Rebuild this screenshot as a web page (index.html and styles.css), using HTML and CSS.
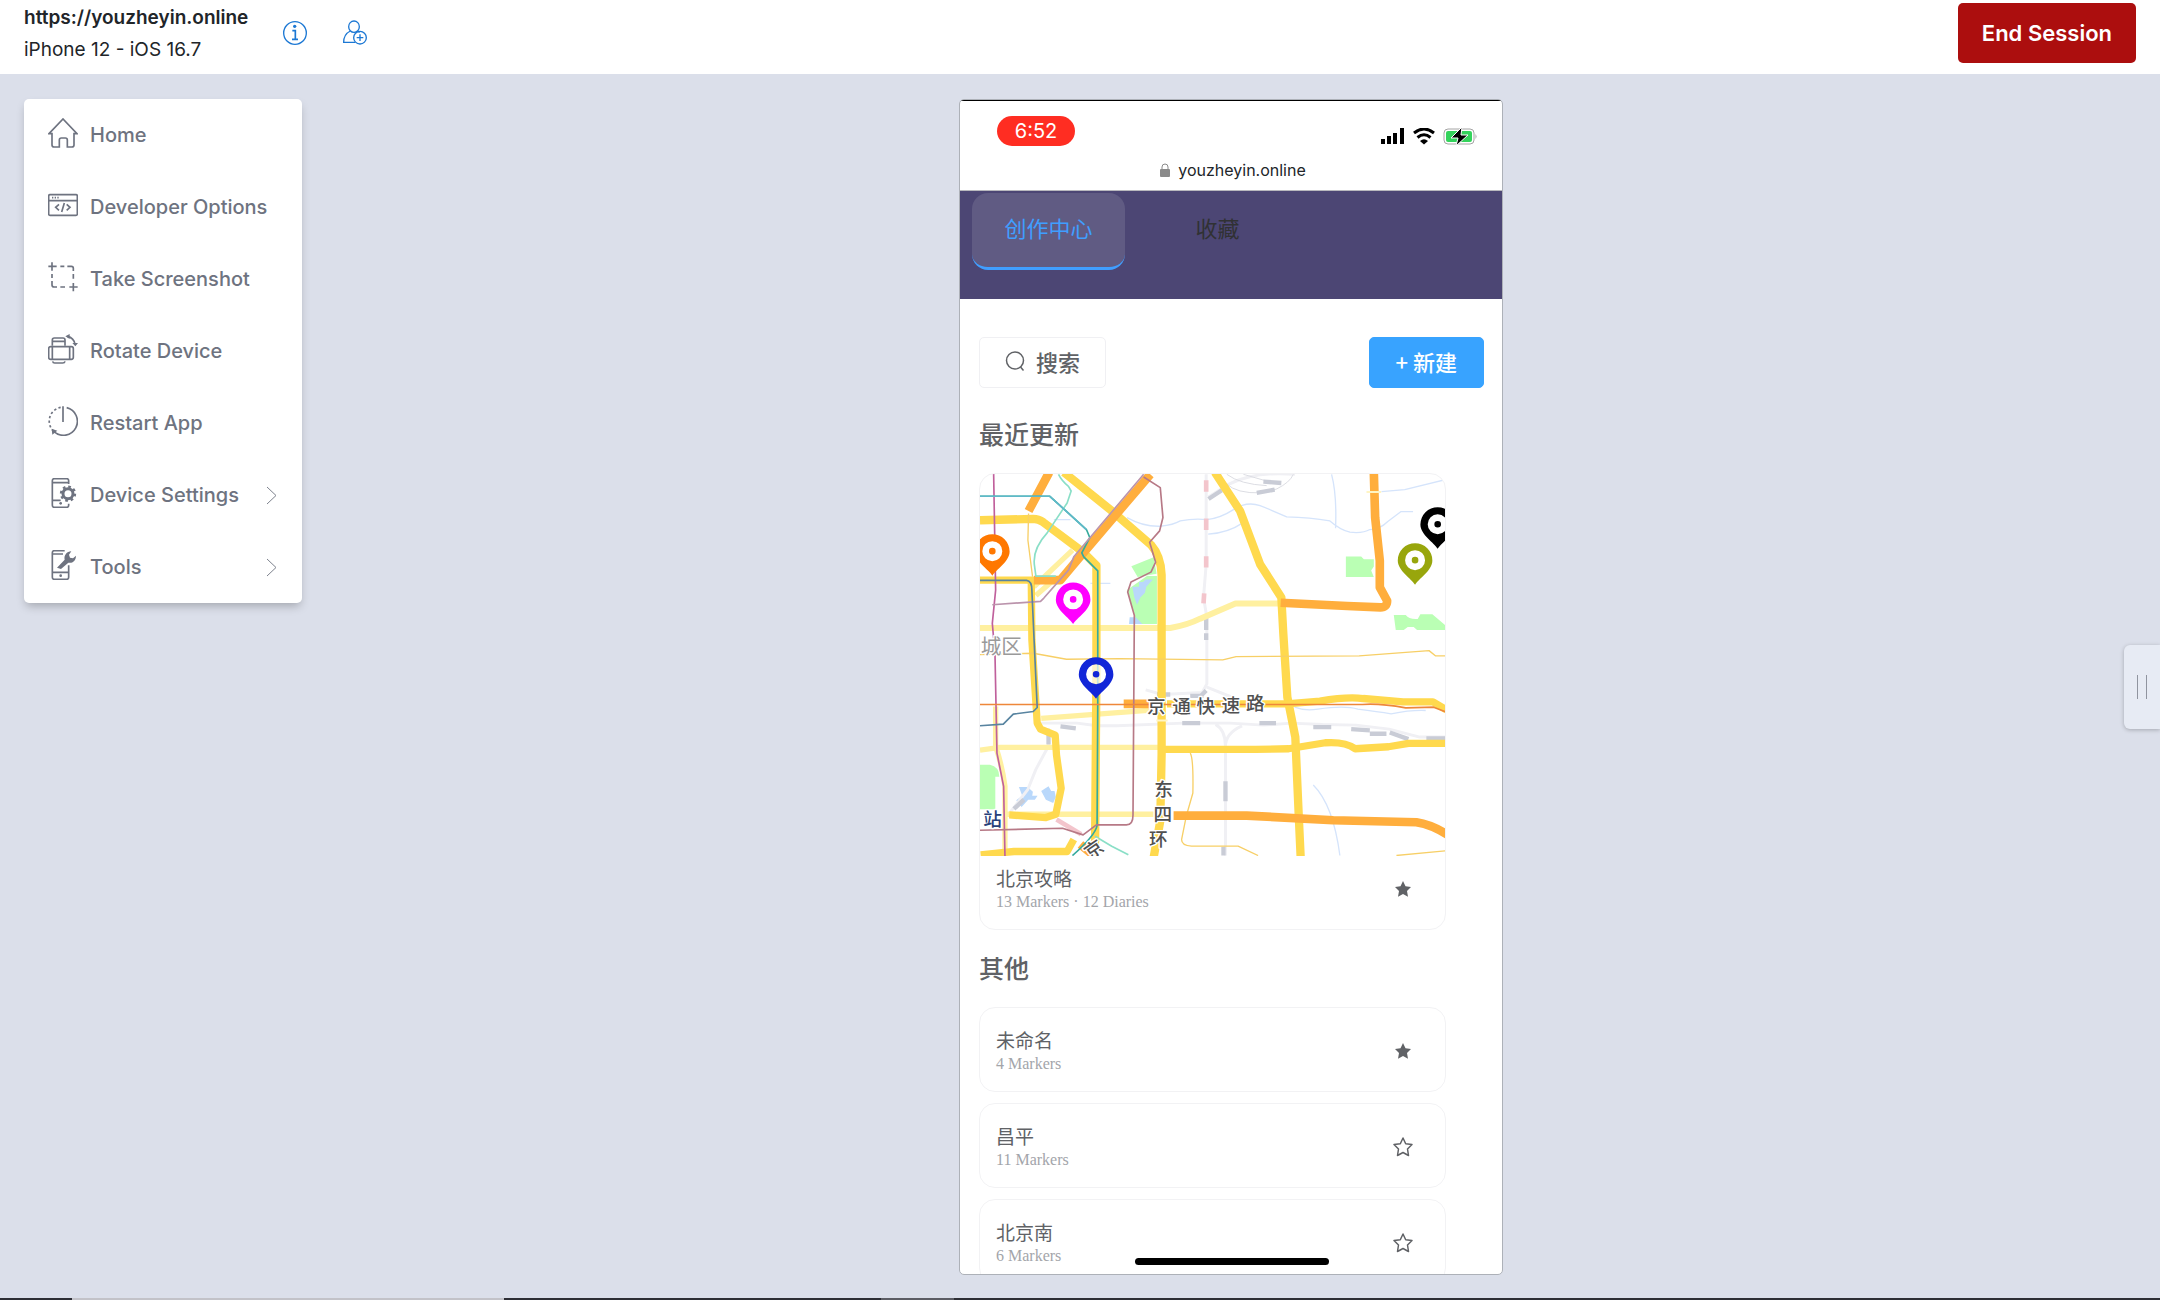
FILE: index.html
```
<!DOCTYPE html>
<html lang="zh-CN">
<head>
  <meta charset="UTF-8" />
  <meta name="viewport" content="width=device-width, initial-scale=1.0" />
  <title>iPhone 12 - iOS 16.7</title>
  <link rel="stylesheet" href="styles.css">
</head>
<body>
  <header class="topbar">
    <div class="session">
      <div class="session-url">https://youzheyin.online</div>
      <div class="session-device">iPhone 12 - iOS 16.7</div>
    </div>
    <button class="icon-btn" aria-label="Session info">
      <svg width="26" height="26" viewBox="0 0 78 78" fill="none" stroke="#1c78d4" stroke-width="4">
        <circle cx="39" cy="39" r="34"/>
        <circle cx="38" cy="19" r="5" fill="#1c78d4" stroke="none"/>
        <path d="M31 32h9v25M30 58h18" stroke-width="5"/>
      </svg>
    </button>
    <button class="icon-btn" aria-label="Invite user">
      <svg width="26" height="26" viewBox="0 0 78 78" fill="none" stroke="#1c78d4" stroke-width="4">
        <ellipse cx="36" cy="20" rx="16" ry="17"/>
        <path d="M25 33c-12 6-20 16-20 34h34M47 33l6 4"/>
        <circle cx="54" cy="53" r="19"/>
        <path d="M54 43v20M44 53h20"/>
      </svg>
    </button>
    <button class="end-btn">End Session</button>
  </header>

  <main class="workspace">
    <nav class="menu">
      <button class="menu-item">
        <svg class="menu-icon" viewBox="0 0 90 90">
          <path d="M3 47L45 3l42 44h-9v34q0 6-6 6H58V66q0-6-6-6H40q-6 0-6 6v21H18q-6 0-6-6V47z"/>
        </svg>
        <span>Home</span>
      </button>
      <button class="menu-item">
        <svg class="menu-icon" viewBox="0 0 90 90">
          <rect x="2" y="14" width="86" height="62" rx="4"/>
          <path d="M2 32h86M12 23h4M20 23h4M28 23h4M33 43l-10 9 10 9M56 43l10 9-10 9M49 39l-8 27"/>
        </svg>
        <span>Developer Options</span>
      </button>
      <button class="menu-item">
        <svg class="menu-icon" viewBox="0 0 90 90">
          <path d="M1 13h25M12 1v25M64 75h25M76 63v25M37 13h12M58 13h12q6 0 6 6v8M76 36v14M12 36v12M12 57v12q0 6 6 6h9M37 75h14"/>
        </svg>
        <span>Take Screenshot</span>
      </button>
      <button class="menu-item">
        <svg class="menu-icon" viewBox="0 0 90 90">
          <rect x="2" y="38" width="74" height="38" rx="6"/>
          <path d="M13 38v38M65 38v38M13 35V18q0-6 6-6h26q6 0 6 6v17M13 22h38M14 82q1 5 6 5h24q6 0 7-5M58 7q20 4 23 24"/>
          <path class="solid" d="M65 0L52 7l13 8zM73 27h17l-8 10z"/>
        </svg>
        <span>Rotate Device</span>
      </button>
      <button class="menu-item">
        <svg class="menu-icon" viewBox="0 0 90 90">
          <path d="M45 1v47M56 5A42 42 0 1 1 18 77"/>
          <path d="M38 4A42 42 0 0 0 16 75" stroke-dasharray="7 7"/>
          <path class="solid" d="M11 68l17 6-15 12z"/>
        </svg>
        <span>Restart App</span>
      </button>
      <button class="menu-item">
        <svg class="menu-icon" viewBox="0 0 90 90">
          <path d="M62 18V8q0-6-6-6H19q-6 0-6 6v74q0 6 6 6h37q6 0 6-6v-5M13 14h49M13 67h25"/>
          <circle class="solid" cx="38" cy="76" r="4"/>
          <circle cx="60" cy="47" r="15" stroke-width="9"/>
          <circle cx="60" cy="47" r="21" stroke-width="7" stroke-dasharray="8 8.500"/>
        </svg>
        <span>Device Settings</span>
        <svg class="chevron" width="11" height="19" viewBox="0 0 11 19"><path d="M1 1l9 8.500-9 8.500"/></svg>
      </button>
      <button class="menu-item">
        <svg class="menu-icon" viewBox="0 0 90 90">
          <path d="M50 2H19q-6 0-6 6v74q0 6 6 6h37q6 0 6-6V46M13 12h32M13 67h49"/>
          <circle class="solid" cx="38" cy="77" r="4"/>
          <path class="solid" d="M27 53l23-24c-3-12 6-25 20-25l-7 10 3 9 9 2 9-8c0 15-11 24-23 21L39 57z"/>
        </svg>
        <span>Tools</span>
        <svg class="chevron" width="11" height="19" viewBox="0 0 11 19"><path d="M1 1l9 8.500-9 8.500"/></svg>
      </button>
    </nav>

    <div class="stage">
      <div class="phone">
        <div class="status">
          <div class="status-row">
            <span class="clock">6:52</span>
            <svg width="97" height="18" viewBox="0 0 97 18">
              <path d="M1 11h4v5H1zM7 8h4v8H7zM13 5h4v11h-4zM20 0h4v16h-4z"/>
              <g fill="none" stroke="#000" stroke-width="3">
                <path d="M34 5q10-8 20 0M37.500 9.500q6.500-5.500 13 0"/>
              </g>
              <path d="M40 13q4-3.500 8 0l-4 3.500z"/>
              <rect x="64" y="1" width="30" height="15" rx="4" fill="none" stroke="#a4a4a4"/>
              <path d="M95.500 6q2 2.500 0 5z" fill="#a4a4a4"/>
              <rect x="66" y="3" width="26" height="11" rx="2" fill="#34d35c"/>
              <path d="M82-1L71 10h7l-2 8 12-11h-7z" stroke="#fff"/>
            </svg>
          </div>
          <div class="address">
            <svg width="10" height="14" viewBox="0 0 10 14">
              <path d="M2 7V4q0-3 3-3t3 3v3" fill="none" stroke="#8a8a8a"/>
              <rect y="6" width="10" height="8" rx="1" fill="#8a8a8a"/>
            </svg>
            <span>youzheyin.online</span>
          </div>
        </div>

        <div class="tabs">
          <button class="tab active">创作中心</button>
          <button class="tab">收藏</button>
        </div>

        <div class="content">
          <div class="toolbar">
            <button class="search-btn">
              <svg width="20" height="20" viewBox="0 0 20 20" fill="none" stroke="#606266" stroke-width="1.500">
                <circle cx="10" cy="9.500" r="8.500"/><path d="M15.500 16l3 3.500"/>
              </svg>
              搜索
            </button>
            <button class="new-btn">+ 新建</button>
          </div>

          <h2>最近更新</h2>
          <article class="card">
            <svg class="map" viewBox="58 221 1398 1149">
              <!-- parks and water -->
              <g fill="#baffb4">
                <path d="M513 498l67-27 9 50-57 10zM500 570l60-42h30v144h-60zM1158 469h46l8 8h30v22l-8 12 8 20h-84zM1302 645h36q10 14 36 12l8-14h36l40 34v13h-86l-10-9h-18l-12 9h-24zM58 1095h30q28 6 28 36h-12v98H58z"/>
              </g>
              <g fill="#b9d8fb">
                <path d="M516 560h20v-14h12l8-8h22l-20 22-4 18-14 14-10 22-8-22zM508 652h18l20 20h-40zM175 1162h26l16 14-2 12h16l-8 12h-20l-20 22-16-20 18-14zM242 1174l22-14 8 14h10l4 18-8 18-22-10z"/>
              </g>
              <g class="river">
                <path d="M500 352q50 28 100 26 40-4 60-16 40-8 80-4 40-4 80-30 40-26 80-12 40 16 80 34 70 2 130 12 30 26 60 34 40 4 60-8 30 0 54-24l40-30h36M1115 222q16 60 12 162M744 402q60-4 104-34M280 358h50M390 550h60M1004 922q30 12 70 6 80-12 120 0 60 8 100 14 60-12 104-10M1060 1156q60 60 80 212M1265 274l70-6 122-30"/>
              </g>

              <!-- railways -->
              <g class="rail">
                <path d="M738 222v270l-8 100 10 60v200l-14 26-120 6-50-14M740 862l100 40M240 970h110l60 8h60l200-8h140l100 6 84-6 94 4 100 2 100 12 92 24h82M796 1368V1040q0-50-30-66M796 1040q0-40 50-62M264 985v54l-38 70-24 60-54 70M745 290l60-38q80-40 200-30"/>
              </g>
              <path class="rail-thin" d="M780 218q10 40 60 54 60 14 110-6 40-20 50-44M800 222q40 30 120 34M850 222l90 26"/>
              <path class="rail-dash" d="M738 650v40M738 700v20M745 296l40-26M738 872l-14 14M300 980l46 6M666 970h54M898 970h50M1060 982h54M1174 988l56 4M1230 1002h50M1290 998l56 20M1400 1016h56M264 1006v28M796 1145v60M190 1200l-30 28M790 1342v26M690 888h40M590 884h40M890 278l54-10M910 244l54 4"/>
              <path class="pink-dash" d="M738 240v34M738 355v34M738 468v34M732 580l-2 30M288 1260l74 44"/>

              <!-- light yellow roads -->
              <g class="road-soft">
                <path d="M58 684h572q50-8 90-28l106-46h140" stroke-width="18"/>
                <path d="M58 1051l60-8h480M242 956l340-26M140 1244h460M105 920v120q20 60 28 120v208M220 560l116-110M226 586l60-52" stroke-width="16"/>
              </g>

              <!-- main yellow roads -->
              <g class="road">
                <path d="M58 360l160-4q16 0 30 10l120 90 40 40v330l-4 500-10 50-70 50M310 216l142 114 120 104q30 34 32 90v540l-4 200-20 110M764 216l76 116 60 160 64 100 6 110 12 190 24 120 10 230 6 130" stroke-width="25"/>
                <path d="M212 530l2 190 16 250 10 18 44 18 4 60 14 100-16 78-30 10-110-8M606 1049h280l100-2 110-18q60-4 90 18l100-6 60-10h110M620 912h360l100-8q80-14 130-8l120 10h90l40 24M58 540h160M340 1320l-20 36H160l-100 10" stroke-width="22"/>
              </g>
              <g class="road-thin">
                <path d="M58 764l160-4 100 18 160-2 310 4 40-10 370-2 210-16 20 16h28M690 1060q10 14 8 120l-20 70-14 70q0 18 30 20h140l60 28M1310 1368l147-14M204 340l-2 80 14 110"/>
              </g>
              <g class="road-orange">
                <path d="M266 216l-62 116M570 222L350 480l-50 60h-80M1242 216l4 136 14 130v80l22 40q0 20-20 20l-100-4-200-10M490 912h110M640 1248h220l260 14 250 6q50 8 100 42M360 1335l34 28" stroke-width="26"/>
              </g>
              <path class="gap" d="M1220 275h44M588 962h34"/>

              <!-- metro lines -->
              <g class="metro">
                <path d="M99 220l6 350-10 100 8 90 6 300 20 100 4 210" stroke="#c0609c"/>
                <path d="M58 288h210l110 100 10 24-24 46 6 12 42 42v400l-2 366q-6 30-74 90" stroke="#35aa9c"/>
                <path d="M294 222q10 20 30 36l8 14-12 36-60 90q-46 50-38 100l4 30h60M404 1310l50 30 50 26" stroke="#8adfc7"/>
                <path d="M550 230l50 32 8 90-10 40-30 34 18 60-14 30-60 30-10 30 20 70-4 600q0 30-20 30h-90l-40 30-62-20-248 6" stroke="#b77986"/>
                <path d="M550 222L340 470l-16 40-74 84-10 10-145 10" stroke="#bb94ac"/>
                <path d="M58 914h1150q50-4 130 10l84-2 40 16" stroke="#ee873a"/>
                <path d="M58 541h140q16 2 16 30l8 180 8 172-12 12-60 8-30 30-70 5" stroke="#5884a0"/>
                <path d="M58 288h210l110 100" stroke="#5fb9c9"/>
              </g>

              <g class="map-label">
                <text class="district" x="60" y="762">城区</text>
                <text class="station" x="68" y="1278">站</text>
                <text x="560" y="939">京</text>
                <text x="636" y="939">通</text>
                <text x="709" y="939">快</text>
                <text x="784" y="937">速</text>
                <text x="858" y="931">路</text>
                <text x="582" y="1190">东</text>
                <text x="580" y="1264">四</text>
                <text x="566" y="1340">环</text>
                <text x="372" y="1370" transform="rotate(-35 400 1350)">京</text>
              </g>

              <defs>
                <path id="pin" fill-rule="evenodd" d="M0 0C-10-18-52-42-52-73A52 52 0 0 1 52-73C52-42 10-18 0 0zM-30-74a30 30 0 1 0 60 0a30 30 0 1 0-60 0zM-10-74a10 10 0 1 1 20 0a10 10 0 1 1-20 0z"/>
              </defs>
              <g fill="#fff">
                <circle cx="95" cy="453" r="31"/><circle cx="338" cy="598" r="31"/>
                <circle cx="1366" cy="480" r="31"/><circle cx="1434" cy="372" r="31"/>
                <circle cx="407" cy="823" r="31" fill-opacity=".7"/>
              </g>
              <use href="#pin" x="95" y="527" fill="#ff7800"/>
              <use href="#pin" x="338" y="672" fill="#f0f"/>
              <use href="#pin" x="407" y="897" fill="#1226d8"/>
              <use href="#pin" x="1434" y="446" fill="#000"/>
              <use href="#pin" x="1366" y="554" fill="#98a60c"/>
            </svg>
            <div class="card-body">
              <div>
                <div class="name">北京攻略</div>
                <div class="meta">13 Markers · 12 Diaries</div>
              </div>
              <button class="star on" aria-label="Unstar"><svg viewBox="0 0 20 20"><path d="M10 2l2.500 5.200 5.500.8-4 4 1 5.700-5-2.700-5 2.700 1-5.700-4-4 5.500-.8z"/></svg></button>
            </div>
          </article>

          <h2>其他</h2>
          <ul class="list">
            <li class="item">
              <div>
                <div class="name">未命名</div>
                <div class="meta">4 Markers</div>
              </div>
              <button class="star on" aria-label="Unstar"><svg viewBox="0 0 20 20"><path d="M10 2l2.500 5.200 5.500.8-4 4 1 5.700-5-2.700-5 2.700 1-5.700-4-4 5.500-.8z"/></svg></button>
            </li>
            <li class="item">
              <div>
                <div class="name">昌平</div>
                <div class="meta">11 Markers</div>
              </div>
              <button class="star" aria-label="Star"><svg viewBox="0 0 20 20"><path d="M10 1l2.700 5.700 6.300.8-4.500 4.500 1 6.500-5.500-3-5.500 3 1-6.500L1 7.500l6.300-.8z"/></svg></button>
            </li>
            <li class="item">
              <div>
                <div class="name">北京南</div>
                <div class="meta">6 Markers</div>
              </div>
              <button class="star" aria-label="Star"><svg viewBox="0 0 20 20"><path d="M10 1l2.700 5.700 6.300.8-4.500 4.500 1 6.500-5.500-3-5.500 3 1-6.500L1 7.500l6.300-.8z"/></svg></button>
            </li>
          </ul>
        </div>
        <div class="home-bar"></div>
      </div>
    </div>

    <button class="drawer-handle" aria-label="Open panel"></button>
  </main>

  <footer class="taskbar"></footer>
</body>
</html>
```

FILE: styles.css
```
* {
  box-sizing: border-box;
}
body {
  margin: 0;
  height: 100vh;
  display: flex;
  flex-direction: column;
  background: #dbdfea;
  color: #212529;
  font-family: Inter, "Noto Sans CJK SC", sans-serif;
  font-size: 19px;
}
button {
  font: inherit;
  color: inherit;
  border: none;
  background: none;
  padding: 0;
  cursor: pointer;
}

/* top bar */
.topbar {
  flex: none;
  height: 74px;
  display: flex;
  align-items: center;
  padding: 0 24px;
  background: #fff;
}
.session {
  margin-right: 34px;
  padding-bottom: 6px;
  line-height: 32px;
}
.session-url {
  font-weight: 600;
}
.icon-btn {
  height: 26px;
  margin-bottom: 8px;
  margin-right: 34px;
}
.end-btn {
  margin-left: auto;
  margin-bottom: 8px;
  padding: 0 24px;
  height: 60px;
  border-radius: 5px;
  background: #ac0e0e;
  color: #fff;
  font-size: 22px;
  font-weight: 600;
}

/* workspace */
.workspace {
  flex: 1;
  min-height: 0;
  display: flex;
  align-items: flex-start;
  position: relative;
  padding: 25px 0 23px 24px;
}
.menu {
  width: 278px;
  background: #fff;
  border-radius: 5px;
  box-shadow: 0 5px 10px -2px rgba(0, 0, 0, 0.25);
}
.menu-item {
  width: 100%;
  height: 72px;
  display: flex;
  align-items: center;
  gap: 12px;
  padding: 0 25px 0 24px;
  color: #6e7380;
  font-size: 20px;
  font-weight: 500;
}
.menu-icon {
  width: 30px;
  height: 30px;
  margin-bottom: 4px;
  fill: none;
  stroke: #6e7380;
  stroke-width: 5;
}
.menu-icon .solid {
  fill: #6e7380;
  stroke: none;
}
.chevron {
  margin-left: auto;
  fill: none;
  stroke: #7d828d;
}
.stage {
  flex: 1;
  align-self: stretch;
  display: flex;
  justify-content: center;
}

/* device screen */
.phone {
  width: 544px;
  height: 100%;
  position: relative;
  overflow: hidden;
  background: #fff;
  border: 1px solid #adb1b8;
  border-radius: 5px;
}
.status {
  height: 91px;
  border-top: 1px solid #000;
  border-bottom: 1px solid #b9b9be;
  padding: 15px 25px 0 37px;
}
.status-row {
  display: flex;
  justify-content: space-between;
  align-items: flex-end;
}
.clock {
  width: 78px;
  height: 30px;
  border-radius: 15px;
  background: #ff2d22;
  color: #fff;
  font-size: 20px;
  line-height: 30px;
  text-align: center;
}
.address {
  display: flex;
  align-items: center;
  justify-content: center;
  gap: 8px;
  margin-top: 12px;
  padding-right: 8px;
  font-size: 16px;
  line-height: 24px;
}
.tabs,
.content {
  font-family: "Noto Sans CJK SC", sans-serif;
}
.tabs {
  height: 108px;
  display: flex;
  align-items: flex-start;
  gap: 16px;
  padding: 2px 12px;
  background: #4c4674;
  font-size: 22px;
}
.tab {
  width: 153px;
  height: 77px;
  padding-bottom: 6px;
  border-bottom: 3px solid transparent;
  border-radius: 16px;
  color: #303133;
}
.tab.active {
  background: #605b83;
  border-color: #409eff;
  color: #409eff;
}
.content {
  padding: 38px 18px 0 19px;
  color: #606266;
}
.toolbar {
  display: flex;
  justify-content: space-between;
  margin-bottom: 28px;
  font-size: 22px;
  font-weight: 500;
}
.search-btn,
.new-btn {
  height: 51px;
  display: flex;
  align-items: center;
  gap: 11px;
  padding: 0 25px 3px;
  border: 1px solid #f0f0f3;
  border-radius: 5px;
}
.new-btn {
  padding: 0 26px 3px;
  background: #38a3ff;
  border-color: #38a3ff;
  color: #fff;
}
h2 {
  margin: 20px 0 23px;
  font-size: 25px;
  font-weight: 500;
  line-height: 34px;
}
.card,
.item {
  margin-right: 38px;
  border: 1px solid #f2f2f4;
  border-radius: 16px;
  overflow: hidden;
}
.card-body,
.item {
  display: flex;
  align-items: center;
  justify-content: space-between;
}
.card-body {
  padding: 9px 32px 16px 16px;
}
.item {
  height: 85px;
  padding: 3px 32px 0 16px;
  margin-bottom: 11px;
}
.list {
  list-style: none;
  margin: 0;
  padding: 0;
}
.name {
  font-size: 19px;
  line-height: 26px;
}
.meta {
  color: #a3a5aa;
  font-family: "Liberation Serif", serif;
  font-size: 16px;
  line-height: 22px;
}
.star {
  width: 20px;
  height: 20px;
}
.star svg {
  display: block;
  fill: none;
  stroke: #606266;
  stroke-width: 1.5;
  stroke-linejoin: round;
}
.star.on svg {
  fill: #606266;
  stroke: none;
}
.home-bar {
  position: absolute;
  left: 50%;
  bottom: 9px;
  width: 194px;
  height: 7px;
  margin-left: -96px;
  border-radius: 4px;
  background: #000;
}

/* map */
.map {
  display: block;
  width: 100%;
  fill: none;
  stroke-linejoin: round;
}
.river {
  stroke: #d5e4fb;
  stroke-width: 4;
}
.rail {
  stroke: #f0f0f4;
  stroke-width: 9;
}
.rail-thin {
  stroke: #dcdde3;
  stroke-width: 3;
}
.rail-dash {
  stroke: #c9ccd6;
  stroke-width: 13;
}
.pink-dash {
  stroke: #f3c5cc;
  stroke-width: 14;
}
.road-soft {
  stroke: #fff0a0;
}
.road {
  stroke: #ffd94e;
}
.road-thin {
  stroke: #f7cf66;
  stroke-width: 4;
}
.road-orange {
  stroke: #ffae3d;
}
.gap {
  stroke: #fff5c4;
  stroke-width: 6;
}
.metro {
  stroke-width: 5;
}
.map-label {
  font-family: "Noto Sans CJK SC", sans-serif;
  font-size: 56px;
  font-weight: 500;
  fill: #505050;
  stroke: #fff;
  stroke-width: 8;
  paint-order: stroke;
}
.district {
  font-size: 62px;
  font-weight: 400;
  fill: #9a9a9a;
}
.station {
  fill: #27407a;
}

/* side drawer and taskbar */
.drawer-handle {
  position: absolute;
  right: 0;
  top: 50%;
  width: 36px;
  height: 84px;
  margin-top: -41px;
  border-radius: 6px 0 0 6px;
  background: #e7ebf4;
  box-shadow: 0 1px 4px rgba(0, 0, 0, 0.25);
}
.drawer-handle::before {
  content: "";
  display: block;
  width: 8px;
  height: 24px;
  margin-left: 13px;
  border: solid #90949f;
  border-width: 0 1px;
}
.taskbar {
  flex: none;
  height: 2px;
  background: linear-gradient(90deg, #2d2e35 72px, #c2c2c8 72px 504px, #2d2e35 504px 881px, #5c5d64 881px 954px, #2d2e35 954px);
}
```
